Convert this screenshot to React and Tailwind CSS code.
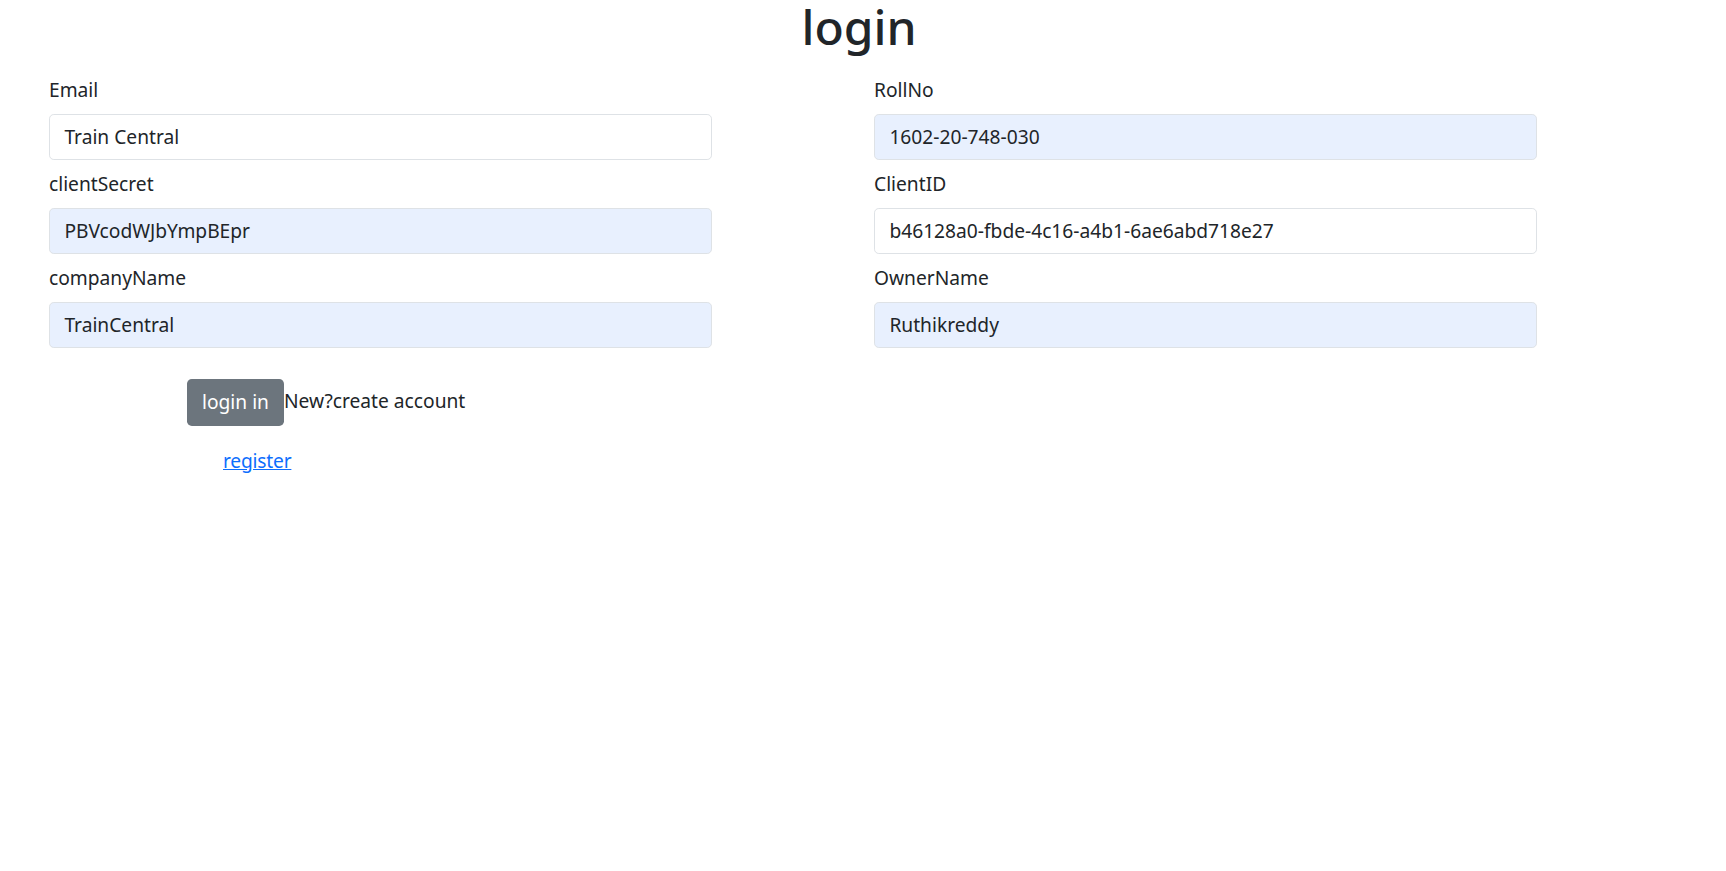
import React from "react";

function Field({ label, value, filled }) {
  return (
    <div className="flex flex-col">
      <label className="text-[19.2px] leading-[28.8px] text-[#212529] mb-[9.6px]">{label}</label>
      <div
        className={`w-[663px] h-[46px] rounded-[4.8px] border border-[#dee2e6] px-[14.4px] flex items-center text-[19.2px] text-[#212529] mb-[9.6px] ${filled ? "bg-[#e8f0fe]" : "bg-white"}`}
      >
        {value}
      </div>
    </div>
  );
}

export default function App() {
  return (
    <div className="min-h-screen bg-white text-[#212529] font-['Segoe_UI','Noto_Sans',sans-serif]">
      <h1 className="text-center text-[48px] leading-[52px] pt-[1px] pr-[8px] font-medium mb-[23px]">login</h1>
      <div className="pl-[49px] grid grid-cols-[825px_825px]">
        <div>
          <Field label="Email" value="Train Central" />
          <Field label="clientSecret" value="PBVcodWJbYmpBEpr" filled />
          <Field label="companyName" value="TrainCentral" filled />
        </div>
        <div>
          <Field label="RollNo" value="1602-20-748-030" filled />
          <Field label="ClientID" value="b46128a0-fbde-4c16-a4b1-6ae6abd718e27" />
          <Field label="OwnerName" value="Ruthikreddy" filled />
        </div>
      </div>
      <div className="pl-[187px] mt-[21px] flex items-start">
        <button className="h-[47px] px-[15px] bg-[#6c757d] text-white rounded-[4.8px] text-[19.2px]">login in</button>
        <span className="text-[19.2px] leading-[28.8px] mt-[8px]">New?create account</span>
      </div>
      <div className="pl-[223px] mt-[21px]">
        <a href="#" className="text-[#0d6efd] underline text-[19.2px] tracking-[-0.2px]">register</a>
      </div>
    </div>
  );
}
